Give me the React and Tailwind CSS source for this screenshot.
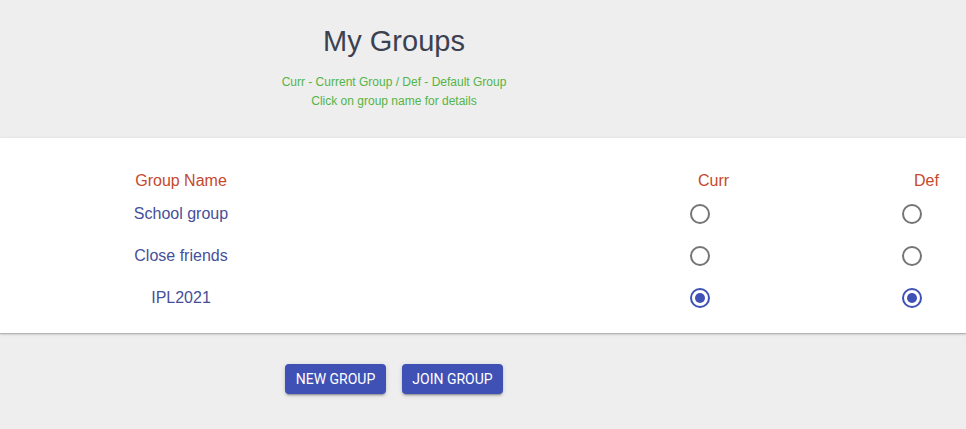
import { useState } from 'react';

const GROUPS = ['School group', 'Close friends', 'IPL2021'];

function Radio({ checked, onClick }) {
  return (
    <button
      onClick={onClick}
      className={`flex h-[20px] w-[20px] items-center justify-center rounded-full border-2 ${
        checked ? 'border-[#3f51b5]' : 'border-[#757575]'
      }`}
    >
      {checked && <span className="h-[10px] w-[10px] rounded-full bg-[#3f51b5]" />}
    </button>
  );
}

export default function App() {
  const [curr, setCurr] = useState(2);
  const [def, setDef] = useState(2);

  return (
    <div className="min-h-[429px] bg-[#eeeeee] font-['Liberation_Sans',Arial,sans-serif]">
      <div className="h-[138px] w-[788px] pt-[24px] text-center">
        <h1 className="text-[29px] leading-[34px] text-[#3c4150]">My Groups</h1>
        <div className="mt-[15px] text-[12px] leading-[19px] text-[#55b446]">
          <p>Curr - Current Group / Def - Default Group</p>
          <p>Click on group name for details</p>
        </div>
      </div>

      <div className="bg-white pt-[31px] pb-[14px] shadow-[0_1px_3px_rgba(0,0,0,0.2),0_1px_1px_rgba(0,0,0,0.14)]">
        <div className="grid h-[24px] grid-cols-[362px_326px_214px_1fr] items-center text-[16px] text-[#c6482d]">
          <div className="text-center">Group Name</div>
          <div />
          <div className="pl-[10px]">Curr</div>
          <div className="pl-[12px]">Def</div>
        </div>
        {GROUPS.map((g, i) => (
          <div key={g} className="grid h-[42px] grid-cols-[362px_326px_214px_1fr] items-center text-[16px] text-[#46509a]">
            <div className="cursor-pointer text-center">{g}</div>
            <div />
            <div className="pl-[2px]">
              <Radio checked={curr === i} onClick={() => setCurr(i)} />
            </div>
            <div>
              <Radio checked={def === i} onClick={() => setDef(i)} />
            </div>
          </div>
        ))}
      </div>

      <div className="flex w-[788px] justify-center gap-4 pt-[31px] font-['Roboto',sans-serif]">
        <button className="h-[30px] w-[101px] rounded bg-[#3f51b5] text-[14px] font-normal uppercase text-white shadow-[0_3px_1px_-2px_rgba(0,0,0,0.2),0_2px_2px_rgba(0,0,0,0.14),0_1px_5px_rgba(0,0,0,0.12)]">
          New Group
        </button>
        <button className="h-[30px] w-[101px] rounded bg-[#3f51b5] text-[14px] font-normal uppercase text-white shadow-[0_3px_1px_-2px_rgba(0,0,0,0.2),0_2px_2px_rgba(0,0,0,0.14),0_1px_5px_rgba(0,0,0,0.12)]">
          Join Group
        </button>
      </div>
    </div>
  );
}
